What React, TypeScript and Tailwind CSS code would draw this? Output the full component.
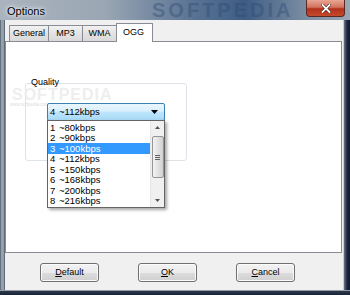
import React from "react";

const items = [
  ["1", "~80kbps"],
  ["2", "~90kbps"],
  ["3", "~100kbps"],
  ["4", "~112kbps"],
  ["5", "~150kbps"],
  ["6", "~168kbps"],
  ["7", "~200kbps"],
  ["8", "~216kbps"],
];

function Btn({ label, k }: { label: string; k: number }) {
  return (
    <div className="w-[59px] h-[19px] rounded-[3px] border border-[#707070] bg-[linear-gradient(#f2f2f2_0%,#ebebeb_50%,#dddddd_50%,#cfcfcf_100%)] flex items-center justify-center text-[9px] text-black shadow-[inset_0_0_0_1px_#fbfbfb]">
      <span>
        <span className="underline">{label.slice(0, k)}</span>
        {label.slice(k)}
      </span>
    </div>
  );
}

export default function App() {
  return (
    <div
      className="w-[350px] h-[295px] overflow-hidden relative flex flex-col bg-[#8e9aa7]"
      style={{ fontFamily: '"Liberation Sans", Arial, sans-serif' }}
    >
      {/* title bar */}
      <div className="h-[20px] shrink-0 relative flex items-start bg-[linear-gradient(90deg,#aab4bf_0%,#9aa6b3_30%,#5a7394_55%,#3e5d84_70%,#7d8fa4_88%,#9ba7b4_100%)]">
        <span className="absolute left-[152px] top-[0px] text-[20px] font-bold tracking-[3px] text-[#2b4a73] opacity-40 leading-[20px]">
          SOFTPEDIA
        </span>
        <span className="relative ml-[7px] mt-[5px] text-[11px] leading-[12px] text-black [text-shadow:0_0_6px_#ffffff,0_0_3px_#ffffff]">
          Options
        </span>
        <div className="ml-auto mr-[5px] w-[39px] h-[17px] rounded-b-[4px] border border-t-0 border-[#5a2a22] bg-[linear-gradient(#e8a593_0%,#d2735d_45%,#b3311b_55%,#c64a2c_100%)] relative flex items-center justify-center">
          <svg width="10" height="9" viewBox="0 0 10 9">
            <path d="M1.5 1 L8.5 8 M8.5 1 L1.5 8" stroke="#3a1a14" strokeWidth="3" strokeLinecap="square" />
            <path d="M1.5 1 L8.5 8 M8.5 1 L1.5 8" stroke="#ffffff" strokeWidth="1.8" strokeLinecap="square" />
          </svg>
        </div>
      </div>

      {/* frame + client */}
      <div className="flex-1 flex">
        <div className="w-[4px] bg-[linear-gradient(90deg,#4e5a68,#9aa5b1_40%,#8e9aa7)]" />
        <div className="flex-1 bg-[#f0f0f0] border-l border-[#5f6b78] flex flex-col relative">
          {/* tabs */}
          <div className="h-[21px] shrink-0 flex items-end pl-[4px] relative z-10">
            <div className="h-[16px] px-[4px] border border-b-0 border-[#898c95] bg-[linear-gradient(#f2f2f2,#e3e3e3_50%,#d9d9d9)] flex items-center justify-center w-[40px] text-[9px] text-black">
              General
            </div>
            <div className="h-[16px] border border-b-0 border-l-0 border-[#898c95] bg-[linear-gradient(#f2f2f2,#e3e3e3_50%,#d9d9d9)] flex items-center justify-center w-[34px] text-[9px] text-black">
              MP3
            </div>
            <div className="h-[16px] border border-b-0 border-l-0 border-[#898c95] bg-[linear-gradient(#f2f2f2,#e3e3e3_50%,#d9d9d9)] flex items-center justify-center w-[34px] text-[9px] text-black">
              WMA
            </div>
            <div className="h-[19px] mb-[-1px] border border-b-0 border-[#898c95] bg-white flex items-start pt-[2px] pl-[6px] w-[37px] text-[9px] text-black -ml-[1px]">
              OGG
            </div>
          </div>
          {/* panel */}
          <div className="h-[212px] shrink-0 mr-[1px] border border-[#898c95] bg-white relative">
            <div className="ml-[19px] mt-[41px] w-[162px] h-[78px] rounded-[3px] border border-[#dde3e9] relative">
              <span className="absolute left-[-14px] top-[5px] text-[16px] font-bold tracking-[1px] leading-[12px] text-[#eeeeee]">
                SOFTPEDIA
              </span>
              <span className="absolute left-[4px] top-[-7px] px-[1px] text-[9px] leading-[10px] text-black">
                Quality
              </span>
              <span className="absolute left-[-16px] top-[19px] text-[4.5px] leading-[4px] text-[#dcdcdc]">
                www.softpedia.com
              </span>
              {/* combo */}
              <div className="absolute left-[21px] top-[19px] w-[118px]">
                <div className="h-[18px] rounded-[2px] border border-[#3c7fb1] bg-[linear-gradient(#eaf6fd_0%,#d9f0fc_45%,#bee6fd_50%,#a7d9f5_100%)] flex items-center pl-[2px] pr-[6px] text-[9.5px] text-black">
                  <span className="w-[9px]">4</span>
                  <span>~112kbps</span>
                  <svg className="ml-auto" width="7" height="4" viewBox="0 0 7 4">
                    <path d="M0 0 H7 L3.5 4 Z" fill="#000" />
                  </svg>
                </div>
                {/* dropdown list */}
                <div className="absolute left-0 top-[17px] w-[118px] h-[88px] bg-white border border-[#646464] flex shadow-[2px_2px_3px_rgba(0,0,0,0.35)] z-20">
                  <div className="flex-1 flex flex-col pt-[1px]">
                    {items.map(([n, t], i) => (
                      <div
                        key={n}
                        className={
                          "h-[10.5px] flex items-center pl-[2px] text-[9.5px] leading-none " +
                          (i === 2 ? "bg-[#3399ff] text-white" : "text-black")
                        }
                      >
                        <span className="w-[9px]">{n}</span>
                        <span>{t}</span>
                      </div>
                    ))}
                  </div>
                  <div className="w-[14px] bg-[#f0f0f0] border-l border-[#e6e6e6] flex flex-col items-center">
                    <div className="h-[13px] flex items-center justify-center">
                      <svg width="5" height="3" viewBox="0 0 5 3">
                        <path d="M0 3 L2.5 0 L5 3 Z" fill="#555" />
                      </svg>
                    </div>
                    <div className="mt-[2px] w-[12px] h-[42px] rounded-[2px] border border-[#959595] bg-[linear-gradient(90deg,#f3f3f3,#e2e2e2_50%,#d0d0d0)] flex flex-col items-center justify-center gap-[1px]">
                      <div className="w-[5px] h-[1px] bg-[#606060]" />
                      <div className="w-[5px] h-[1px] bg-[#606060]" />
                      <div className="w-[5px] h-[1px] bg-[#606060]" />
                    </div>
                    <div className="mt-auto h-[13px] flex items-center justify-center">
                      <svg width="5" height="3" viewBox="0 0 5 3">
                        <path d="M0 0 H5 L2.5 3 Z" fill="#555" />
                      </svg>
                    </div>
                  </div>
                </div>
              </div>
            </div>
          </div>
          {/* buttons */}
          <div className="flex pl-[35px] gap-[39px] mt-[10px]">
            <Btn label="Default" k={1} />
            <Btn label="OK" k={1} />
            <Btn label="Cancel" k={1} />
          </div>
        </div>
        <div className="w-[1px] bg-[#c8cdd4]" />
        <div className="w-[6px] bg-[linear-gradient(90deg,#6b7686,#1c2840_50%,#0f1a30)]" />
      </div>
      <div className="h-[5px] shrink-0 bg-[linear-gradient(#c8cdd4_0%,#2a3548_30%,#1a2438_100%)]" />
    </div>
  );
}
